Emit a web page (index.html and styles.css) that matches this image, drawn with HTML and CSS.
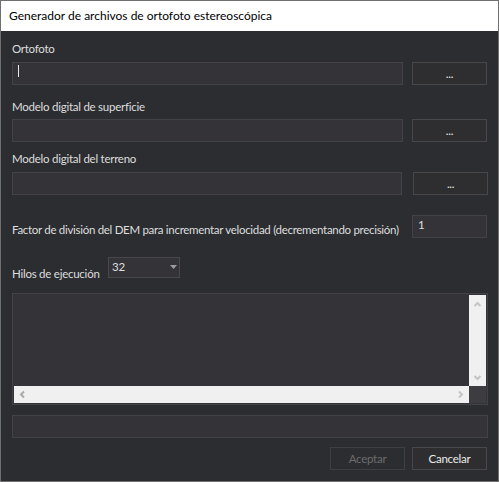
FILE: index.html
```html
<!DOCTYPE html>
<html lang="es">
<head>
<meta charset="utf-8">
<title>Generador de archivos de ortofoto estereoscópica</title>
<link rel="stylesheet" href="styles.css">
</head>
<body>
<div class="window">
  <div class="titlebar">Generador de archivos de ortofoto estereoscópica</div>
  <div class="content">
    <div class="label l1">Ortofoto</div>
    <div class="row r1">
      <div class="input path"><span class="caret"></span></div>
      <div class="btn">...</div>
    </div>
    <div class="label l2">Modelo digital de superficie</div>
    <div class="row r2">
      <div class="input path"></div>
      <div class="btn">...</div>
    </div>
    <div class="label l3">Modelo digital del terreno</div>
    <div class="row r3">
      <div class="input path"></div>
      <div class="btn shifted">...</div>
    </div>
    <div class="row factor">
      <div class="label factor-label">Factor de división del DEM para incrementar velocidad (decrementando precisión)</div>
      <div class="input value">1</div>
    </div>
    <div class="row hilos">
      <div class="label hilos-label">Hilos de ejecución</div>
      <div class="combo">
        <span class="combo-text">32</span>
        <svg class="combo-arrow" width="7" height="4" viewBox="0 0 7 4"><polygon points="0,0 7,0 3.5,4" fill="#9c9c9c"/></svg>
      </div>
    </div>
    <div class="log">
      <div class="log-inner">
        <div class="log-area"></div>
        <div class="vscroll">
          <svg width="9" height="6" viewBox="0 0 9 6"><polyline points="1.5,5 4.5,2 7.5,5" fill="none" stroke="#c4c4c4" stroke-width="2"/></svg>
          <svg width="9" height="6" viewBox="0 0 9 6"><polyline points="1.5,1 4.5,4 7.5,1" fill="none" stroke="#c4c4c4" stroke-width="2"/></svg>
        </div>
        <div class="hscroll">
          <svg width="6" height="9" viewBox="0 0 6 9"><polyline points="5,1.5 2,4.5 5,7.5" fill="none" stroke="#a8a8a8" stroke-width="2"/></svg>
          <svg width="6" height="9" viewBox="0 0 6 9"><polyline points="1,1.5 4,4.5 1,7.5" fill="none" stroke="#c4c4c4" stroke-width="2"/></svg>
        </div>
        <div class="corner"></div>
      </div>
    </div>
    <div class="input status"></div>
    <div class="actions">
      <div class="btn disabled">Aceptar</div>
      <div class="btn">Cancelar</div>
    </div>
  </div>
</div>
</body>
</html>
```
FILE: styles.css
```css
* { box-sizing: border-box; }
html, body { margin: 0; padding: 0; background: #2b2d31; }
body {
  font-family: "Lato", "Open Sans", sans-serif;
  font-size: 11.5px;
  letter-spacing: -0.25px;
  color: #dedede;
}
.window {
  width: 499px;
  height: 482px;
  border: 1px solid #707070;
  display: flex;
  flex-direction: column;
  overflow: hidden;
}
.titlebar {
  height: 30px;
  flex: none;
  background: #ffffff;
  color: #000000;
  padding: 7px 0 0 8px;
  font-size: 12px;
  letter-spacing: 0;
  line-height: 16px;
  white-space: nowrap;
}
.content {
  flex: 1;
  background: #2b2d31;
  padding: 0 10px 0 11px;
  display: flex;
  flex-direction: column;
}
.label {
  height: 16px;
  line-height: 16px;
  white-space: nowrap;
  flex: none;
}
.l1 { margin-top: 10px; }
.l2 { margin-top: 14px; }
.l3 { margin-top: 9px; }
.row {
  display: flex;
  height: 23px;
  flex: none;
}
.r1 { margin-top: 5px; }
.r2 { margin-top: 4px; }
.r3 { margin-top: 5px; }
.input {
  background: #343338;
  border: 1px solid #434246;
  height: 23px;
}
.path { width: 391px; position: relative; }
.caret {
  position: absolute;
  left: 5px;
  top: 2px;
  width: 1px;
  height: 12px;
  background: #e8e8e8;
}
.btn {
  width: 75px;
  height: 23px;
  margin-left: 9px;
  background: #2e2e30;
  border: 1px solid #48484b;
  color: #ececec;
  display: flex;
  align-items: center;
  justify-content: center;
  line-height: 16px;
}
.shifted { margin-left: 11px; }
.factor {
  margin-top: 20px;
  align-items: flex-end;
}
.factor-label {
  width: 400px;
  letter-spacing: -0.3px;
}
.value {
  width: 75px;
  padding: 1px 5px;
  line-height: 16px;
}
.hilos {
  margin-top: 19px;
  height: 21px;
  align-items: flex-start;
}
.hilos-label {
  width: 96px;
  margin-top: 9px;
}
.combo {
  width: 72px;
  height: 21px;
  background: #343338;
  border: 1px solid #48484b;
  display: flex;
  justify-content: space-between;
  align-items: flex-start;
  padding: 1px 0 0 3px;
  line-height: 16px;
}
.combo-arrow { margin: 6px 2px 0 0; }
.log {
  margin-top: 15px;
  height: 112px;
  border: 1px solid #434246;
  background: #343338;
  padding: 1px;
  flex: none;
}
.log-inner {
  height: 100%;
  display: grid;
  grid-template-columns: 1fr 17px;
  grid-template-rows: 1fr 17px;
}
.vscroll {
  background: #f0f0f0;
  display: flex;
  flex-direction: column;
  justify-content: space-between;
  align-items: center;
  padding: 6px 0 5px;
}
.hscroll {
  background: #f0f0f0;
  display: flex;
  justify-content: space-between;
  align-items: center;
  padding: 0 5px;
}
.corner { background: #3d3c41; }
.status {
  margin-top: 10px;
  height: 23px;
  flex: none;
}
.actions {
  margin-top: 9px;
  display: flex;
  justify-content: flex-end;
  padding-right: 1px;
  flex: none;
}
.actions .btn { margin-left: 7px; }
.disabled {
  color: #6c6c6c;
  background: #2c2d30;
  border-color: #3f3f42;
}
```
